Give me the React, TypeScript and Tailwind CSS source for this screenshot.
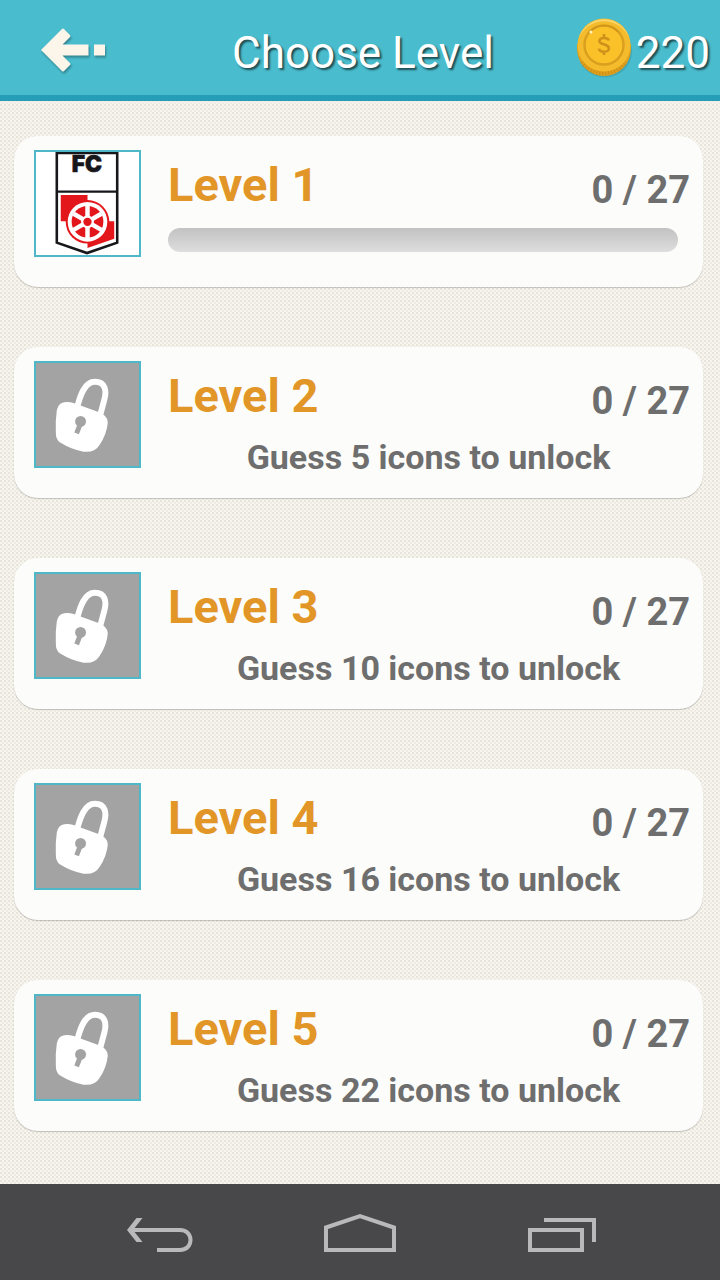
import React from 'react';

type Level = { id: number; solved: number; total: number; unlockAt: number };

const levels: Level[] = [
  { id: 1, solved: 0, total: 27, unlockAt: 0 },
  { id: 2, solved: 0, total: 27, unlockAt: 5 },
  { id: 3, solved: 0, total: 27, unlockAt: 10 },
  { id: 4, solved: 0, total: 27, unlockAt: 16 },
  { id: 5, solved: 0, total: 27, unlockAt: 22 },
];

function ArrowIcon() {
  return (
    <svg width="68" height="48" viewBox="0 0 68 48" className="drop-shadow-[1px_2px_1px_rgba(0,0,0,0.3)]" aria-hidden="true">
      <path
        d="M1 24L22 3Q23 2 24 3L30 9Q31 10 30 11L22.500 18.500H48.500V29.500H22.500L30 37Q31 38 30 39L24 45Q23 46 22 45ZM54 18.500H65V29.500H54Z"
        fill="#fbf5ea"
      />
    </svg>
  );
}

function CoinIcon() {
  return (
    <svg width="56" height="60" viewBox="0 0 56 60" aria-hidden="true">
      <ellipse cx="29" cy="33.500" rx="27" ry="26" fill="#000" opacity="0.1" />
      <path d="M1 26V31A27 27 0 0 0 55 31V26Z" fill="#e0a01c" />
      <path d="M6 43A27 27 0 0 0 50 43" transform="translate(0 1)" fill="none" stroke="#c98d17" strokeWidth="4" strokeDasharray="1 2" />
      <circle cx="28" cy="27" r="26.500" fill="#f4bb2c" />
      <path d="M3 20A26 26 0 0 1 53 20A27 27 0 0 0 3 20" fill="#fbd56a" />
      <circle cx="28" cy="27" r="19.500" fill="#fbc129" stroke="#d99f1f" strokeWidth="2.400" />
      <path d="M14 14A19 19 0 0 1 42 14" fill="none" stroke="#c98b17" strokeWidth="1.500" opacity="0.5" />
      <path
        d="M32.800 22.500C32.300 19.500 24 18.600 23.400 22.800C22.900 27 33 25.500 32.900 30.500C32.500 35 23.500 34.500 23.100 30.600M28 16V19.500M28 33.500V37"
        fill="none"
        stroke="#ce921b"
        strokeWidth="2.600"
      />
      <circle cx="15" cy="14" r="1.500" fill="#fff3c0" />
    </svg>
  );
}

function ClubIcon() {
  return (
    <svg viewBox="0 0 104 104" className="size-full" aria-hidden="true">
      <rect width="104" height="104" fill="#fff" />
      <path d="M21 1H82V91.500L51.500 102L21 91.500Z" fill="#fff" stroke="#17171b" strokeWidth="2.600" />
      <path d="M21 40H82" stroke="#17171b" strokeWidth="2.400" />
      <text x="51.500" y="20" textAnchor="middle" fill="#17171b" stroke="#17171b" strokeWidth="0.600" fontSize="23" className="font-['Inter',sans-serif] font-black">FC</text>
      <path d="M25 43.500H52V70H25ZM52 70H79V87.500L52 97Z" fill="#e3171b" />
      <circle cx="52" cy="70.500" r="22" fill="#e3171b" />
      <circle cx="52" cy="70.500" r="20" fill="#fff" />
      <circle cx="52" cy="70.500" r="16" fill="#e3171b" />
      <path d="M52 54V87M38 62.400L66 78.600M38 78.600L66 62.400" stroke="#fff" strokeWidth="4.500" />
      <circle cx="52" cy="70.500" r="6.500" fill="#fff" />
      <circle cx="52" cy="70.500" r="4.200" fill="#e3171b" />
    </svg>
  );
}

function LockIcon() {
  return (
    <svg viewBox="0 0 104 104" className="size-full" aria-hidden="true">
      <path d="M42 43C44 36 48 19 59.500 19C70 19 71.500 28 69 37L65 52" fill="none" stroke="#fff" strokeWidth="6" />
      <path
        d="M26 40.500Q31 38.500 38 40.500L63 49.500Q72.500 53 72.500 60Q71.500 72 64 83Q59 91 48 89.500Q36 87.500 24 80Q20 77.500 20 70Q19.500 58 21 48Q22.500 42 26 40.500Z"
        fill="#fff"
      />
      <circle cx="45" cy="59" r="5.500" fill="#a3a3a3" />
      <path d="M45.500 59.500L41 71" stroke="#a3a3a3" strokeWidth="5" />
    </svg>
  );
}

function LevelCard({ level }: { level: Level }) {
  const locked = level.unlockAt > 0;
  return (
    <li>
      <button
        type="button"
        className="flex h-[151px] w-full items-start rounded-[24px] bg-[#fcfcfa] pt-[14px] pl-5 text-left font-bold shadow-[0_1px_1px_rgba(0,0,0,0.2)]"
      >
        <span className={`block size-[107px] shrink-0 border-2 border-[#4fb8c8] ${locked ? 'bg-[#a3a3a3]' : 'bg-white'}`}>
          {locked ? <LockIcon /> : <ClubIcon />}
        </span>
        <span className="ml-[27px] flex min-w-0 flex-1 flex-col">
          <span className="flex h-[67px] items-start justify-between pr-[13px]">
            <span className="text-[47px] leading-[70px] text-[#e29627]">Level {level.id}</span>
            <span className="pt-[5px] text-[38px] leading-[70px] text-[#6e6e6e]">
              {level.solved} / {level.total}
            </span>
          </span>
          {locked ? (
            <span className="mr-[14px] text-center text-[34px] leading-[58px] text-[#6e6e6e]">
              Guess {level.unlockAt} icons to unlock
            </span>
          ) : (
            <span
              role="progressbar"
              aria-label={`Level ${level.id} progress`}
              aria-valuenow={level.solved}
              aria-valuemax={level.total}
              className="mt-[11px] mr-[25px] h-6 rounded-full bg-linear-to-b from-[#c2c2c2] to-[#dedede]"
            />
          )}
        </span>
      </button>
    </li>
  );
}

export default function App() {
  return (
    <div className="flex min-h-screen flex-col bg-[#f8f5ee] bg-[radial-gradient(circle_at_1px_1px,#e7e4dc_1px,transparent_1px),radial-gradient(circle_at_3px_3px,#eeebe4_1px,transparent_1px)] bg-size-[4px_4px] font-['Roboto',sans-serif]">
      <header className="grid h-[101px] grid-cols-[1fr_auto_1fr] items-center border-b-[6px] border-[#269db7] bg-[#49bccd] text-[44px] text-white text-shadow-[2px_2px_2px_rgba(0,0,0,0.6)]">
        <button type="button" aria-label="Back" className="ml-10 justify-self-start pt-1">
          <ArrowIcon />
        </button>
        <h1 className="pt-[10px] pl-[6px] leading-[56px] font-normal">Choose Level</h1>
        <div className="flex items-center gap-1 justify-self-end pr-[10px]">
          <CoinIcon />
          <span className="pt-[10px] leading-[56px] font-normal">220</span>
        </div>
      </header>
      <main className="flex-1 pt-[35px] pr-[17px] pb-[53px] pl-[14px]">
        <ul className="flex flex-col gap-[60px]">
          {levels.map((level) => (
            <LevelCard key={level.id} level={level} />
          ))}
        </ul>
      </main>
      <nav aria-label="System" className="flex h-24 items-center justify-center gap-[122px] bg-[#48484a] text-[#b9b9bb]">
        <button type="button" aria-label="Back">
          <svg width="80" height="48" viewBox="0 0 80 48" fill="none" stroke="currentColor" strokeWidth="4" aria-hidden="true">
            <path d="M12 22H62C76 22 76 42 62 42H39" />
            <path d="M9 22L18.500 10H24.500L15 22L24.500 34H18.500Z" fill="currentColor" stroke="none" />
          </svg>
        </button>
        <button type="button" aria-label="Home">
          <svg width="80" height="48" viewBox="0 0 80 48" fill="none" stroke="currentColor" strokeWidth="4" aria-hidden="true">
            <path d="M6 19.500L40 8L74 19.500V42H6Z" />
          </svg>
        </button>
        <button type="button" aria-label="Recent apps">
          <svg width="80" height="48" viewBox="0 0 80 48" fill="none" stroke="currentColor" strokeWidth="4" aria-hidden="true">
            <path d="M8 22H60V42H8ZM22 12H72V34" />
          </svg>
        </button>
      </nav>
    </div>
  );
}
